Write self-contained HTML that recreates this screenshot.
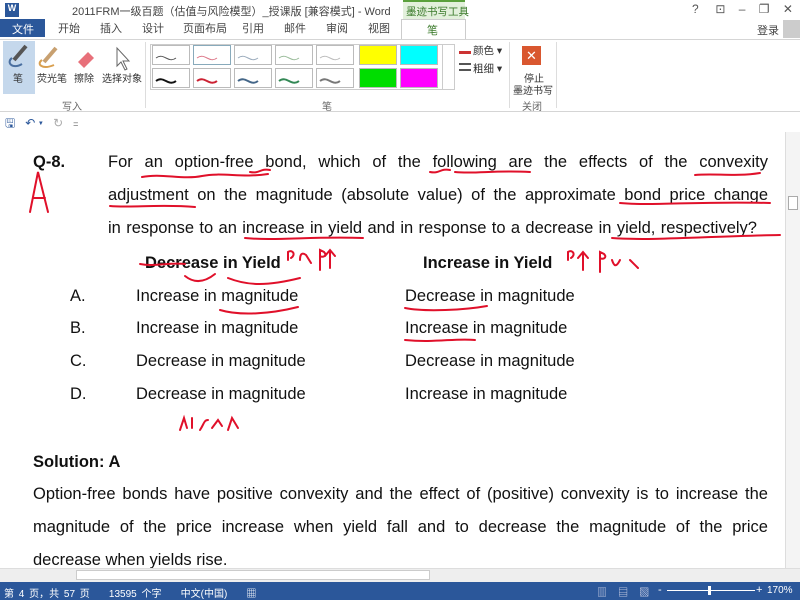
<!DOCTYPE html>
<html><head><meta charset="utf-8"><style>
*{margin:0;padding:0;box-sizing:border-box}
body{width:800px;height:600px;overflow:hidden;background:#fff;font-family:"Liberation Sans","Noto Sans CJK SC",sans-serif;position:relative}
.a{position:absolute;white-space:nowrap}
.cj{font-family:"Liberation Sans","Noto Sans CJK SC",sans-serif}
.doc{font-family:"Liberation Sans",sans-serif;font-size:16.5px;color:#111}
.j{text-align:justify;text-align-last:justify;white-space:normal}
.tab{font-size:11px;color:#444;top:20px}
.pen{position:absolute;width:38px;height:20px;border:1px solid #bbb;background:#fff}
</style></head><body>
<!-- title bar -->
<div class="a" style="left:0;top:0;width:800px;height:20px;background:#fff"></div>
<div class="a" style="left:5px;top:3px;width:14px;height:14px;background:#2b579a;color:#fff;font-size:9px;text-align:center;font-weight:bold">W</div>
<div class="a cj" style="left:72px;top:3px;font-size:11px;color:#444">2011FRM一级百题（估值与风险模型）_授课版 [兼容模式] - Word</div>
<div class="a" style="left:403px;top:0;width:62px;height:20px;background:#e3f0dc;border-top:2px solid #5aa03c"></div>
<div class="a cj" style="left:406px;top:4px;font-size:10.5px;color:#3a7a2a">墨迹书写工具</div>
<div class="a" style="left:692px;top:2px;font-size:12px;color:#555;letter-spacing:0">?&nbsp;&nbsp;&nbsp;&nbsp;&nbsp;⊡&nbsp;&nbsp;&nbsp;&nbsp;–&nbsp;&nbsp;&nbsp;&nbsp;❐&nbsp;&nbsp;&nbsp;&nbsp;✕</div>
<!-- tabs -->
<div class="a" style="left:0;top:19px;width:45px;height:18px;background:#2b579a"></div>
<div class="a cj" style="left:12px;top:21px;font-size:11px;color:#fff">文件</div>
<div class="a cj tab" style="left:58px">开始</div><div class="a cj tab" style="left:100px">插入</div><div class="a cj tab" style="left:142px">设计</div><div class="a cj tab" style="left:183px">页面布局</div><div class="a cj tab" style="left:242px">引用</div><div class="a cj tab" style="left:284px">邮件</div><div class="a cj tab" style="left:326px">审阅</div><div class="a cj tab" style="left:368px">视图</div>
<div class="a" style="left:401px;top:19px;width:65px;height:22px;background:#fff;border:1px solid #ccc;border-bottom:none"></div>
<div class="a cj" style="left:427px;top:22px;font-size:11px;color:#3a7a2a">笔</div>
<div class="a cj" style="left:757px;top:22px;font-size:11px;color:#444">登录</div>
<div class="a" style="left:783px;top:20px;width:17px;height:18px;background:#ccc"></div>
<!-- ribbon -->
<div class="a" style="left:0;top:39px;width:800px;height:73px;background:#fff;border-top:1px solid #d5d5d5;border-bottom:1px solid #d5d5d5"></div>
<div class="a" style="left:3px;top:41px;width:32px;height:53px;background:#c5d8ec"></div>
<svg class="a" style="left:0;top:40px" width="145" height="35"><path d="M12 18c-6 4 0 12 10 6" stroke="#4a6fa0" stroke-width="2" fill="none"/><path d="M14 20l12-14" stroke="#555" stroke-width="4"/><path d="M42 20c-6 4 0 10 12 5" stroke="#d9a050" stroke-width="2" fill="none"/><path d="M44 22l12-14" stroke="#c8a070" stroke-width="4"/><path d="M78 22l10-10 6 6-10 10z" fill="#e8707a"/><path d="M117 8v18l4-4 4 8 2-1-4-8h6z" fill="#fff" stroke="#666"/></svg>
<div class="a cj" style="left:13px;top:70px;font-size:10px;color:#333">笔</div>
<div class="a cj" style="left:37px;top:70px;font-size:10px;color:#333">荧光笔</div>
<div class="a cj" style="left:74px;top:70px;font-size:10px;color:#333">擦除</div>
<div class="a cj" style="left:102px;top:70px;font-size:10px;color:#333">选择对象</div>
<div class="a cj" style="left:62px;top:98px;font-size:10px;color:#666">写入</div>
<div class="a" style="left:145px;top:42px;width:1px;height:66px;background:#ddd"></div>
<div class="a" style="left:150px;top:44px;width:305px;height:46px;border:1px solid #ccc"></div>
<div class="pen" style="left:152px;top:45px"></div><div class="pen" style="left:193px;top:45px;border-color:#8ab"></div><div class="pen" style="left:234px;top:45px"></div><div class="pen" style="left:275px;top:45px"></div><div class="pen" style="left:316px;top:45px"></div><div class="pen" style="left:359px;top:45px;background:#ff0"></div><div class="pen" style="left:400px;top:45px;background:#0ff"></div>
<div class="pen" style="left:152px;top:68px"></div><div class="pen" style="left:193px;top:68px"></div><div class="pen" style="left:234px;top:68px"></div><div class="pen" style="left:275px;top:68px"></div><div class="pen" style="left:316px;top:68px"></div><div class="pen" style="left:359px;top:68px;background:#0d0"></div><div class="pen" style="left:400px;top:68px;background:#f0f"></div>
<svg class="a" style="left:152px;top:45px" width="205" height="45" fill="none"><path d="M4 13c8-6 12 6 20 0" stroke="#555"/><path d="M45 13c8-6 12 6 20 0" stroke="#d78"/><path d="M86 13c8-6 12 6 20 0" stroke="#9ab"/><path d="M127 13c8-6 12 6 20 0" stroke="#9b9"/><path d="M168 13c8-6 12 6 20 0" stroke="#bbb"/><path d="M4 36c8-6 12 6 20 0" stroke="#111" stroke-width="2"/><path d="M45 36c8-6 12 6 20 0" stroke="#c23" stroke-width="2"/><path d="M86 36c8-6 12 6 20 0" stroke="#468" stroke-width="2"/><path d="M127 36c8-6 12 6 20 0" stroke="#385" stroke-width="2"/><path d="M168 36c8-6 12 6 20 0" stroke="#777" stroke-width="2"/></svg>
<div class="a" style="left:442px;top:45px;width:12px;height:44px;border-left:1px solid #ccc"></div>
<div class="a" style="left:459px;top:46px;width:12px;height:8px;border-bottom:3px solid #c33"></div>
<div class="a cj" style="left:473px;top:43px;font-size:10.5px;color:#333">颜色 ▾</div>
<div class="a" style="left:459px;top:63px;width:12px;height:8px;border-top:2px solid #555;border-bottom:2px solid #555"></div>
<div class="a cj" style="left:473px;top:61px;font-size:10.5px;color:#333">粗细 ▾</div>
<div class="a" style="left:509px;top:42px;width:1px;height:66px;background:#ddd"></div>
<div class="a" style="left:522px;top:46px;width:19px;height:19px;background:#d9572f;color:#fff;font-size:13px;text-align:center;line-height:19px">✕</div>
<div class="a cj" style="left:524px;top:70px;font-size:10px;color:#333">停止</div>
<div class="a cj" style="left:513px;top:82px;font-size:10px;color:#333">墨迹书写</div>
<div class="a cj" style="left:522px;top:98px;font-size:10px;color:#666">关闭</div>
<div class="a cj" style="left:322px;top:98px;font-size:10px;color:#666">笔</div>
<div class="a" style="left:556px;top:42px;width:1px;height:66px;background:#ddd"></div>
<!-- QAT -->
<div class="a" style="left:5px;top:114px;font-size:12px;color:#2b579a">🖫&nbsp;&nbsp;&nbsp;↶ ▾&nbsp;&nbsp;&nbsp;<span style="color:#aaa">↻</span>&nbsp;&nbsp;&nbsp;<span style="color:#666;font-size:9px">=</span></div>
<!-- scrollbar right -->
<div class="a" style="left:785px;top:132px;width:15px;height:436px;background:#f4f4f4;border-left:1px solid #ddd"></div>
<div class="a" style="left:788px;top:196px;width:10px;height:14px;background:#fff;border:1px solid #aaa"></div>
<!-- document -->
<div class="a doc" style="left:33px;top:153px;font-weight:bold">Q-8.</div>
<div class="a doc j" style="left:108px;top:153px;width:660px">For an option-free bond, which of the following are the effects of the convexity</div>
<div class="a doc j" style="left:108px;top:186px;width:660px">adjustment on the magnitude (absolute value) of the approximate bond price change</div>
<div class="a doc j" style="left:108px;top:219px;width:649px">in response to an increase in yield and in response to a decrease in yield, respectively?</div>
<div class="a doc" style="left:145px;top:254px;font-weight:bold">Decrease in Yield</div>
<div class="a doc" style="left:423px;top:254px;font-weight:bold">Increase in Yield</div>
<div class="a doc" style="left:70px;top:287px">A.</div><div class="a doc" style="left:136px;top:287px">Increase in magnitude</div><div class="a doc" style="left:405px;top:287px">Decrease in magnitude</div>
<div class="a doc" style="left:70px;top:319px">B.</div><div class="a doc" style="left:136px;top:319px">Increase in magnitude</div><div class="a doc" style="left:405px;top:319px">Increase in magnitude</div>
<div class="a doc" style="left:70px;top:352px">C.</div><div class="a doc" style="left:136px;top:352px">Decrease in magnitude</div><div class="a doc" style="left:405px;top:352px">Decrease in magnitude</div>
<div class="a doc" style="left:70px;top:385px">D.</div><div class="a doc" style="left:136px;top:385px">Decrease in magnitude</div><div class="a doc" style="left:405px;top:385px">Increase in magnitude</div>
<div class="a doc" style="left:33px;top:453px;font-weight:bold">Solution: A</div>
<div class="a doc j" style="left:33px;top:485px;width:735px">Option-free bonds have positive convexity and the effect of (positive) convexity is to increase the</div>
<div class="a doc j" style="left:33px;top:518px;width:735px">magnitude of the price increase when yield fall and to decrease the magnitude of the price</div>
<div class="a doc" style="left:33px;top:551px">decrease when yields rise.</div>
<!-- annotations -->
<svg class="a" style="left:0;top:140px" width="785" height="300" fill="none" stroke="#e0102a" stroke-width="2" stroke-linecap="round">
<path d="M30 72l8-40 10 40M33 58h12"/>
<path d="M142 37c20-4 40 3 60-1s40 2 66-2"/>
<path d="M250 32c10 2 10-4 20-2"/><path d="M430 32c10 2 10-4 20-2M455 32c20 2 40-2 75 0"/>
<path d="M695 35c20-2 40 2 65-2"/><path d="M110 66c20 2 50-2 85 1"/><path d="M620 63c30 3 80-2 150 0"/>
<path d="M245 98c30 3 70-2 118 0"/><path d="M612 98c40 3 100-2 168-3"/>
<path d="M140 124c15 3 30-2 45 0"/><path d="M220 170c20 6 50 4 78-3"/><path d="M405 168c20 4 60 2 82-2"/>
<path d="M185 136c10 8 20 6 30-2"/><path d="M228 138c20 8 40 8 72 0"/><path d="M405 200c30 3 50-2 70 0"/>
<path d="M288 120v-8c5-3 8 3 3 6"/><path d="M300 120c0-6 2-8 6-5l5 8"/><path d="M320 130v-20l4 2c4 4-2 6-4 4M330 128v-16M325 116l5-6 5 6"/>
<path d="M568 120v-8c5-3 8 3 3 6"/><path d="M583 130v-16M578 118l5-6 5 6"/><path d="M600 132v-20l4 2c4 4-2 6-4 4M612 120c2 6 4 8 8 0M630 120l8 8"/>
<path d="M180 290l4-12 3 10M192 288v-10M200 290c4-6 4-10 8-10M212 288l6-8 4 6M228 290l4-12 6 10"/>
</svg>
<!-- horizontal scroll -->
<div class="a" style="left:0;top:568px;width:800px;height:14px;background:#eee;border-top:1px solid #ddd"></div>
<div class="a" style="left:76px;top:570px;width:354px;height:10px;background:#fff;border:1px solid #ccc"></div>
<!-- status bar -->
<div class="a" style="left:0;top:582px;width:800px;height:18px;background:#2b579a"></div>
<div class="a cj" style="left:4px;top:585px;font-size:10px;color:#fff;word-spacing:2px">第 4 页，共 57 页&nbsp;&nbsp;&nbsp;&nbsp;13595 个字&nbsp;&nbsp;&nbsp;&nbsp;中文(中国)&nbsp;&nbsp;&nbsp;&nbsp;▦</div>
<div class="a" style="left:597px;top:584px;font-size:10px;color:#dde">▥&nbsp;&nbsp;&nbsp;&nbsp;▤&nbsp;&nbsp;&nbsp;&nbsp;▧</div>
<div class="a" style="left:658px;top:584px;font-size:11px;color:#fff">-</div>
<div class="a" style="left:667px;top:590px;width:88px;height:1px;background:#fff"></div>
<div class="a" style="left:708px;top:586px;width:3px;height:9px;background:#fff"></div>
<div class="a" style="left:756px;top:584px;font-size:11px;color:#fff">+</div>
<div class="a" style="left:767px;top:585px;font-size:10px;color:#fff">170%</div>
</body></html>
